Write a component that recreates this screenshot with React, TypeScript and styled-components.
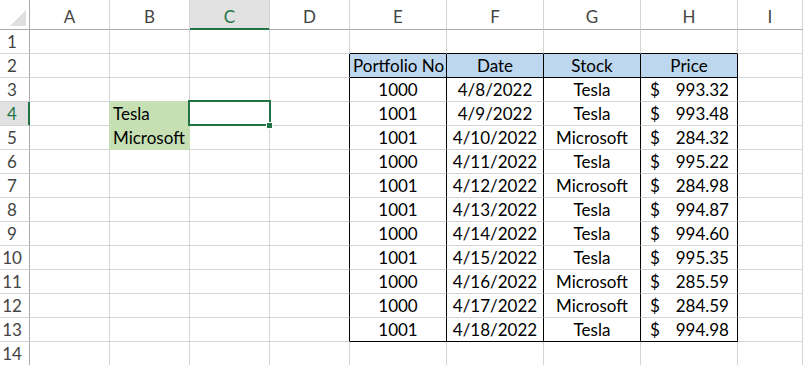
import React from "react";
import styled, { createGlobalStyle, css } from "styled-components";

const GlobalStyle = createGlobalStyle`
  html, body { margin: 0; padding: 0; background: #ffffff; overflow: hidden; }
  body { font-family: Lato, "Liberation Sans", sans-serif; }
`;

const GRID = "#d4d4d4";
const HEAD_LINE = "#ababab";
const GREEN = "#217346";
const FILL_GREEN = "#c6e0b4";
const FILL_BLUE = "#bdd7ee";

const Sheet = styled.div`
  display: grid;
  grid-template-columns: 30px repeat(4, 80px) repeat(4, 97px) 1fr;
  grid-template-rows: 30px;
  grid-auto-rows: 24px;
  width: 803px;
  height: 365px;
  overflow: hidden;
  font-family: Lato, "Liberation Sans", sans-serif;
  font-size: 17px;
  color: #000;
`;

const Corner = styled.div`
  box-sizing: border-box;
  border-right: 1px solid ${HEAD_LINE};
  border-bottom: 1px solid ${HEAD_LINE};
  display: flex;
  align-items: flex-end;
  justify-content: flex-end;
  padding: 0 3px 3px 0;
  background: #fff;
`;

const ColHeader = styled.div<{ $selected?: boolean }>`
  box-sizing: border-box;
  border-right: 1px solid ${GRID};
  border-bottom: 1px solid ${HEAD_LINE};
  background: #fff;
  color: #444;
  text-align: center;
  line-height: 29px;
  padding-top: 2px;
  ${(p) =>
    p.$selected &&
    css`
      background: #e1e1e1;
      color: ${GREEN};
      border-bottom-color: ${GREEN};
      box-shadow: inset 0 -1px 0 ${GREEN};
    `}
`;

const RowHeader = styled.div<{ $selected?: boolean }>`
  box-sizing: border-box;
  border-right: 1px solid ${HEAD_LINE};
  border-bottom: 1px solid ${GRID};
  background: #fff;
  color: #444;
  text-align: center;
  padding-right: 5px;
  line-height: 23px;
  ${(p) =>
    p.$selected &&
    css`
      background: #e1e1e1;
      color: ${GREEN};
      border-right-color: ${GREEN};
      box-shadow: inset -1px 0 0 ${GREEN};
    `}
`;

const Cell = styled.div<{
  $align: "left" | "center";
  $fill?: string;
  $right: string;
  $bottom: string;
  $flush?: boolean;
}>`
  position: relative;
  box-sizing: border-box;
  border-right: 1px solid ${(p) => p.$right};
  border-bottom: 1px solid ${(p) => p.$bottom};
  background: ${(p) => p.$fill ?? "#fff"};
  text-align: ${(p) => p.$align};
  padding: ${(p) => (p.$flush ? "0" : "0 3px")};
  line-height: 23px;
  white-space: nowrap;
`;

const Accounting = styled.div`
  display: flex;
  justify-content: space-between;
  padding: 0 8px 0 9px;
`;

const Selection = styled.div`
  position: absolute;
  z-index: 5;
  left: -2px;
  top: -2px;
  width: 83px;
  height: 26px;
  box-sizing: border-box;
  border: 2px solid ${GREEN};
  pointer-events: none;
`;

const FillHandle = styled.div`
  position: absolute;
  left: 76px;
  top: 20px;
  width: 5px;
  height: 5px;
  background: ${GREEN};
  border: 1px solid #fff;
`;

const cols = ["A", "B", "C", "D", "E", "F", "G", "H", "I"];

type Row = [string, string, string, string];
const data: Row[] = [
  ["1000", "4/8/2022", "Tesla", "993.32"],
  ["1001", "4/9/2022", "Tesla", "993.48"],
  ["1001", "4/10/2022", "Microsoft", "284.32"],
  ["1000", "4/11/2022", "Tesla", "995.22"],
  ["1001", "4/12/2022", "Microsoft", "284.98"],
  ["1001", "4/13/2022", "Tesla", "994.87"],
  ["1000", "4/14/2022", "Tesla", "994.60"],
  ["1001", "4/15/2022", "Tesla", "995.35"],
  ["1000", "4/16/2022", "Microsoft", "285.59"],
  ["1000", "4/17/2022", "Microsoft", "284.59"],
  ["1001", "4/18/2022", "Tesla", "994.98"],
];
const headers = ["Portfolio No", "Date", "Stock", "Price"];

const greenCells: Record<string, string> = { "4-1": "Tesla", "5-1": "Microsoft" };

function isGreen(r: number, c: number) {
  return c === 1 && (r === 4 || r === 5);
}

function rightColor(r: number, c: number) {
  if (r >= 2 && r <= 13 && c >= 3 && c <= 7) return "#000";
  if (isGreen(r, c) || isGreen(r, c + 1)) return FILL_GREEN;
  return GRID;
}

function bottomColor(r: number, c: number) {
  if (c >= 4 && c <= 7 && (r === 1 || r === 2 || r === 13)) return "#000";
  if (isGreen(r, c) || isGreen(r + 1, c)) return FILL_GREEN;
  return GRID;
}

function cellContent(r: number, c: number): React.ReactNode {
  const key = `${r}-${c}`;
  if (greenCells[key]) return greenCells[key];
  if (r === 2 && c >= 4 && c <= 7) return headers[c - 4];
  if (r >= 3 && r <= 13 && c >= 4 && c <= 7) {
    const row = data[r - 3];
    if (c === 7)
      return (
        <Accounting>
          <span>$</span>
          <span>{row[3]}</span>
        </Accounting>
      );
    return row[c - 4];
  }
  return null;
}

export default function App() {
  const rows = Array.from({ length: 14 }, (_, i) => i + 1);
  return (
    <>
      <GlobalStyle />
      <Sheet>
        <Corner>
          <svg width="16" height="16" viewBox="0 0 16 16">
            <polygon points="16,0 16,16 0,16" fill="#dfdfdf" />
          </svg>
        </Corner>
        {cols.map((c) => (
          <ColHeader key={c} $selected={c === "C"}>
            {c}
          </ColHeader>
        ))}
        {rows.map((r) => (
          <React.Fragment key={r}>
            <RowHeader $selected={r === 4}>{r}</RowHeader>
            {cols.map((_, c) => {
              const inTable = r >= 2 && r <= 13 && c >= 4 && c <= 7;
              const fill = isGreen(r, c)
                ? FILL_GREEN
                : r === 2 && inTable
                ? FILL_BLUE
                : undefined;
              const isPrice = inTable && r >= 3 && c === 7;
              return (
                <Cell
                  key={c}
                  $align={inTable ? "center" : "left"}
                  $fill={fill}
                  $right={rightColor(r, c)}
                  $bottom={bottomColor(r, c)}
                  $flush={isPrice}
                >
                  {cellContent(r, c)}
                  {r === 4 && c === 2 && (
                    <Selection>
                      <FillHandle />
                    </Selection>
                  )}
                </Cell>
              );
            })}
          </React.Fragment>
        ))}
      </Sheet>
    </>
  );
}
